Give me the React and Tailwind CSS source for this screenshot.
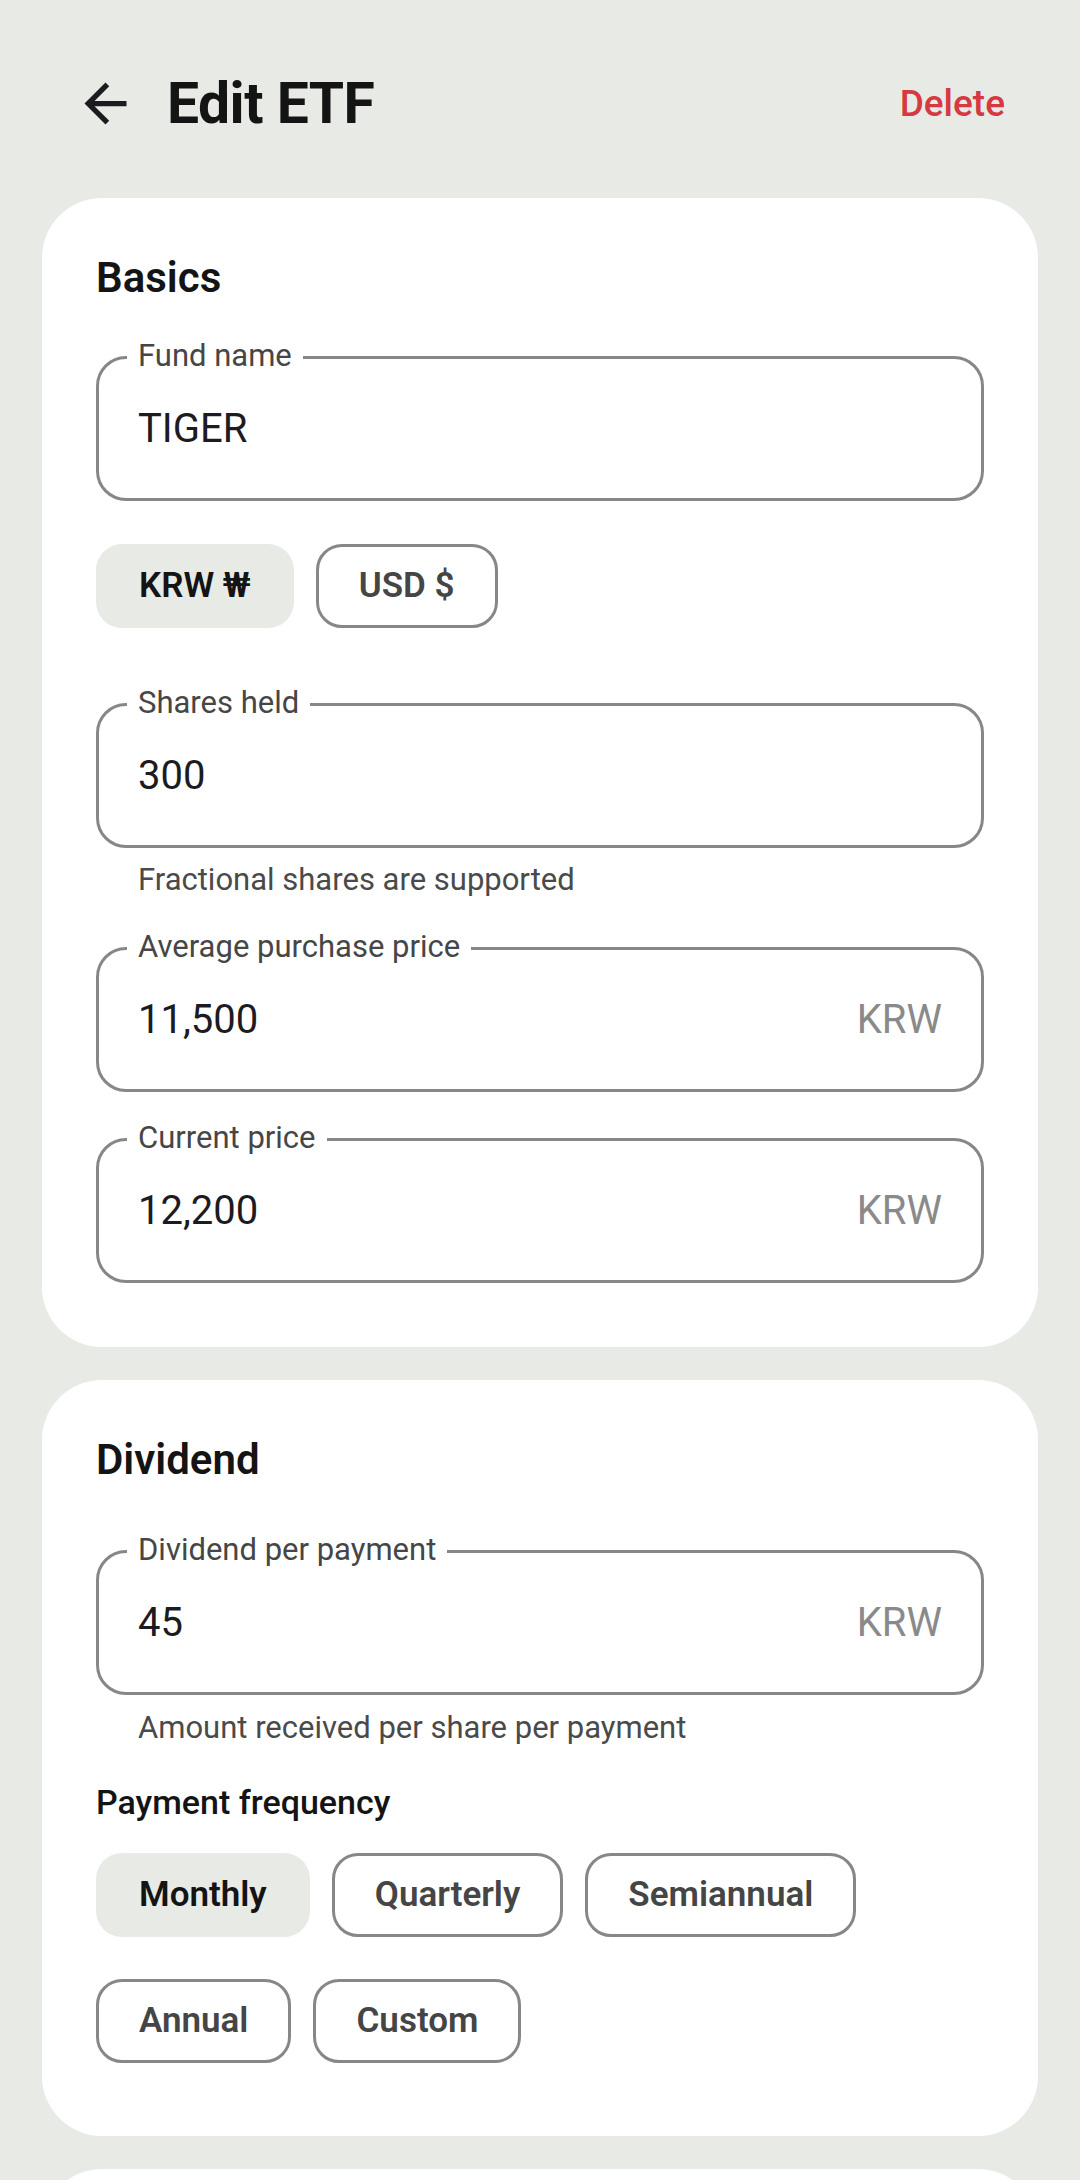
import React, { useState } from 'react';

const ArrowBack = () => (
  <svg viewBox="0 0 24 24" className="w-[63px] h-[63px]" fill="#1c1b1f">
    <path d="M20 11H7.83l5.59-5.59L12 4l-8 8 8 8 1.41-1.41L7.83 13H20v-2z" />
  </svg>
);

const Field = ({ label, value, suffix }) => (
  <div className="relative h-[145px] rounded-[30px] border-[3px] border-[#878787] flex items-center pl-[39px] pr-[39px]">
    <span className="absolute left-[28px] top-[-21px] bg-white px-[11px] text-[31px] leading-[36px] text-[#464646]">
      {label}
    </span>
    <span className="flex-1 text-[40px] text-[#1c1b1f]">{value}</span>
    {suffix && <span className="text-[40px] text-[#8a8a8a]">{suffix}</span>}
  </div>
);

const Chip = ({ label, selected, onClick }) => (
  <div className="h-[126px] flex items-center">
    <button
      type="button"
      onClick={onClick}
      className={
        selected
          ? 'h-[84px] px-[40px] rounded-[26px] border-[3px] border-transparent bg-[#e8eae6] text-[35px] font-semibold text-[#141414]'
          : 'h-[84px] px-[40px] rounded-[26px] border-[3px] border-[#878787] bg-white text-[35px] font-semibold text-[#454545]'
      }
    >
      {label}
    </button>
  </div>
);

const App = () => {
  const [currency, setCurrency] = useState('KRW');
  const [frequency, setFrequency] = useState('Monthly');

  return (
    <div className="w-full h-[2180px] overflow-hidden bg-[#e8eae6] font-['Roboto','Noto_Sans',sans-serif]">
      {/* Header */}
      <div className="pt-[72px] h-[198px] pl-[74px] pr-[75px]">
        <div className="h-[63px] flex items-center">
          <ArrowBack />
          <h1 className="ml-[30px] flex-1 text-[57px] font-bold text-[#141414] tracking-[-0.5px]">Edit ETF</h1>
          <button type="button" className="text-[37px] font-medium text-[#d6393f]">
            Delete
          </button>
        </div>
      </div>

      {/* Basics */}
      <div className="mx-[42px] rounded-[60px] bg-white px-[54px] pt-[52px] pb-[64px]">
        <h2 className="text-[42px] leading-[55px] font-semibold text-[#141414]">Basics</h2>
        <div className="mt-[51px]">
          <Field label="Fund name" value="TIGER" />
        </div>
        <div className="mt-[22px] flex gap-[22px]">
          <Chip label="KRW ₩" selected={currency === 'KRW'} onClick={() => setCurrency('KRW')} />
          <Chip label="USD $" selected={currency === 'USD'} onClick={() => setCurrency('USD')} />
        </div>
        <div className="mt-[54px]">
          <Field label="Shares held" value="300" />
        </div>
        <p className="mt-[11px] pl-[42px] text-[31px] leading-[42px] text-[#4a4a4a]">Fractional shares are supported</p>
        <div className="mt-[46px]">
          <Field label="Average purchase price" value="11,500" suffix="KRW" />
        </div>
        <div className="mt-[46px]">
          <Field label="Current price" value="12,200" suffix="KRW" />
        </div>
      </div>

      {/* Dividend */}
      <div className="mt-[33px] mx-[42px] rounded-[60px] bg-white px-[54px] pt-[52px] pb-[52px]">
        <h2 className="text-[42px] leading-[55px] font-semibold text-[#141414]">Dividend</h2>
        <div className="mt-[63px]">
          <Field label="Dividend per payment" value="45" suffix="KRW" />
        </div>
        <p className="mt-[12px] pl-[42px] text-[31px] leading-[42px] text-[#4a4a4a]">
          Amount received per share per payment
        </p>
        <h3 className="mt-[30px] text-[34px] leading-[46px] font-medium text-[#141414]">Payment frequency</h3>
        <div className="mt-[7px] flex flex-wrap gap-x-[22px]">
          {['Monthly', 'Quarterly', 'Semiannual', 'Annual', 'Custom'].map((f) => (
            <Chip key={f} label={f} selected={frequency === f} onClick={() => setFrequency(f)} />
          ))}
        </div>
      </div>

      {/* Next card, only its top edge shows */}
      <div className="mt-[33px] mx-[42px] h-[200px] rounded-[60px] bg-white" />
    </div>
  );
};

export default App;
